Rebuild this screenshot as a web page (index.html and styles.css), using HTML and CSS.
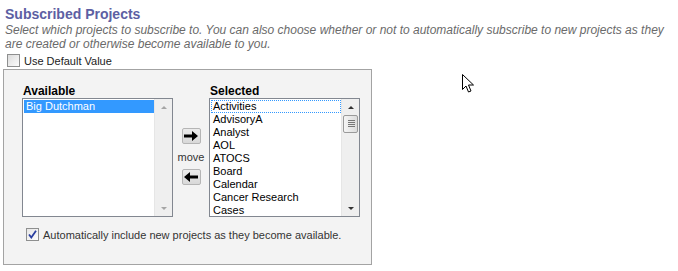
FILE: index.html
```html
<!DOCTYPE html>
<html lang="en">
<head>
  <meta charset="UTF-8">
  <title>Subscribed Projects</title>
  <link rel="stylesheet" href="styles.css">
</head>
<body>
  <div class="page">
    <h2 class="title">Subscribed Projects</h2>
    <p class="desc">Select which projects to subscribe to. You can also choose whether or not to automatically subscribe to new projects as they are created or otherwise become available to you.</p>
    <label class="check-row">
      <span class="box"></span>Use Default Value
    </label>

    <div class="panel">
      <div class="lists">
        <div class="col">
          <div class="col-label">Available</div>
          <div class="listbox">
            <ul class="items">
              <li class="sel">Big Dutchman</li>
            </ul>
            <div class="sbar">
              <span class="arr up dim"></span>
              <span class="track"></span>
              <span class="arr down dim"></span>
            </div>
          </div>
        </div>

        <div class="mover">
          <button class="mv"><svg width="14" height="10" viewBox="0 0 14 10"><path d="M0 3.5h8V0l6 5-6 5V6.5H0z" fill="#000"/></svg></button>
          <span class="mv-label">move</span>
          <button class="mv"><svg width="14" height="10" viewBox="0 0 14 10"><path d="M14 3.5H6V0L0 5l6 5V6.5h8z" fill="#000"/></svg></button>
        </div>

        <div class="col">
          <div class="col-label">Selected</div>
          <div class="listbox">
            <ul class="items">
              <li class="focus">Activities</li>
              <li>AdvisoryA</li>
              <li>Analyst</li>
              <li>AOL</li>
              <li>ATOCS</li>
              <li>Board</li>
              <li>Calendar</li>
              <li>Cancer Research</li>
              <li>Cases</li>
            </ul>
            <div class="sbar">
              <span class="arr up"></span>
              <span class="track"><span class="thumb"></span></span>
              <span class="arr down"></span>
            </div>
          </div>
        </div>
      </div>

      <label class="check-row auto">
        <span class="box checked"><svg width="9" height="9" viewBox="0 0 9 9"><path d="M1 4.5l2.3 3L8 0.8" fill="none" stroke="#2a3fa0" stroke-width="1.8"/></svg></span>Automatically include new projects as they become available.
      </label>
    </div>
  </div>

  <svg class="cursor" width="13" height="20" viewBox="0 0 13 20">
    <path d="M0.5 0.5v15l3.5-3.5 2.5 6 2.5-1-2.5-6h5z" fill="#fff" stroke="#000" stroke-width="1"/>
  </svg>
</body>
</html>
```

FILE: styles.css
```css
body {
  margin: 0;
  background: #ffffff;
  font-family: "Liberation Sans", Arial, sans-serif;
  color: #222;
}
.page {
  padding: 6px 0 0 3px;
  width: 672px;
}
.title {
  margin: 0 0 0 2px;
  font-size: 14px;
  line-height: 17px;
  color: #5d5fa3;
  font-weight: bold;
}
.desc {
  margin: 0 0 0 2px;
  font-size: 12px;
  line-height: 14px;
  font-style: italic;
  color: #6a6a6a;
}
.check-row {
  display: flex;
  align-items: center;
  font-size: 11px;
  color: #222;
  margin: 3px 0 0 4px;
  height: 13px;
}
.box {
  width: 11px;
  height: 11px;
  border: 1px solid #8e8f8f;
  background: linear-gradient(135deg, #dcdcdc, #fbfbfb);
  margin-right: 4px;
  display: flex;
  align-items: center;
  justify-content: center;
}
.box.checked {
  background: linear-gradient(135deg, #e6e6e6, #fdfdfd);
}
.panel {
  margin-top: 2px;
  width: 367px;
  height: 194px;
  border: 1px solid #a3a3a3;
  background: #f3f3f3;
}
.lists {
  display: flex;
  padding: 15px 0 0 18px;
}
.col-label {
  font-size: 12px;
  font-weight: bold;
  line-height: 13px;
  color: #000;
  margin: 0 0 0 1px;
}
.listbox {
  width: 149px;
  height: 117px;
  border: 1px solid #828790;
  background: #fff;
  display: flex;
}
.items {
  list-style: none;
  margin: 0;
  padding: 1px 0 0 1px;
  flex: 1;
  font-size: 11px;
  line-height: 13px;
  color: #000;
}
.items li {
  padding-left: 2px;
  height: 13px;
}
.items li.sel {
  background: #3399ff;
  color: #fff;
}
.items li.focus {
  outline: 1px dotted #3399ff;
  outline-offset: -1px;
}
.sbar {
  width: 17px;
  background: #efefef;
  border-left: 1px solid #e6e6e6;
  display: flex;
  flex-direction: column;
}
.arr {
  height: 16px;
  display: flex;
  align-items: center;
  justify-content: center;
}
.arr::before {
  content: "";
  border-left: 3px solid transparent;
  border-right: 3px solid transparent;
}
.arr.up::before {
  border-bottom: 3px solid #333;
}
.arr.down::before {
  border-top: 3px solid #333;
}
.arr.dim.up::before {
  border-bottom-color: #a5a5a5;
}
.arr.dim.down::before {
  border-top-color: #a5a5a5;
}
.track {
  flex: 1;
}
.thumb {
  display: block;
  margin: 0 1px;
  height: 16px;
  border: 1px solid #9a9a9a;
  border-radius: 2px;
  background: linear-gradient(90deg, #f5f5f5, #dcdcdc);
  position: relative;
}
.thumb::after {
  content: "";
  position: absolute;
  left: 4px;
  top: 4px;
  width: 7px;
  height: 7px;
  background: repeating-linear-gradient(180deg, #777 0 1px, transparent 1px 2px);
}
.mover {
  width: 36px;
  display: flex;
  flex-direction: column;
  align-items: center;
  padding-top: 43px;
}
.mv {
  width: 19px;
  height: 16px;
  padding: 0;
  border: 1px solid #b5b5b5;
  border-radius: 2px;
  background: linear-gradient(#ececec, #d8d8d8);
  display: flex;
  align-items: center;
  justify-content: center;
}
.mv-label {
  font-size: 11px;
  line-height: 13px;
  color: #333;
  margin: 7px 0 5px;
}
.check-row.auto {
  margin: 11px 0 0 22px;
  color: #333;
}
.cursor {
  position: absolute;
  left: 462px;
  top: 74px;
}
```
